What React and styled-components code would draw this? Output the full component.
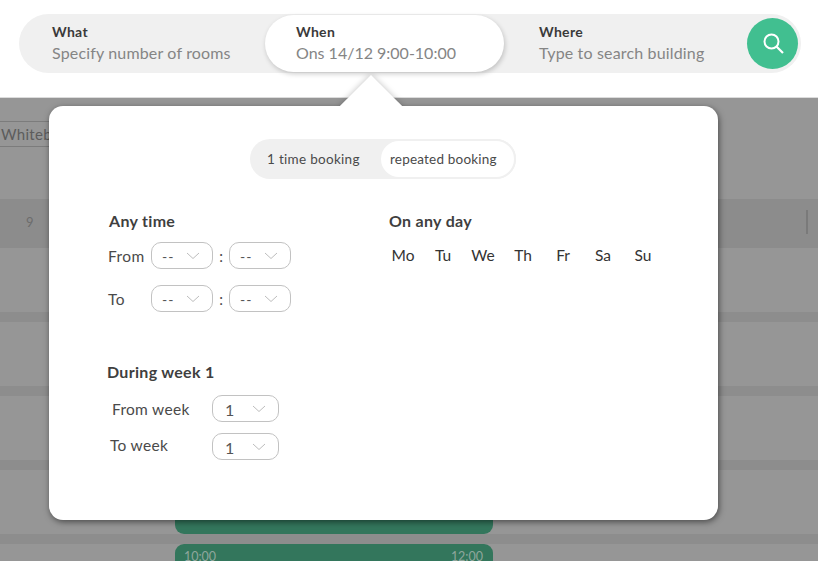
import React from "react";
import styled, { createGlobalStyle } from "styled-components";

const GlobalStyle = createGlobalStyle`
  * { box-sizing: border-box; }
  html, body { margin: 0; height: 100%; overflow: hidden; }
  body {
    background: #969696;
    font-family: "Lato", "Noto Sans", sans-serif;
    color: #333;
  }
`;

const days = ["Mo", "Tu", "We", "Th", "Fr", "Sa", "Su"];

const Chevron = () => (
  <ChevronIcon width="14" height="8" viewBox="0 0 14 8">
    <path d="M1 1l6 5.5L13 1" fill="none" stroke="#bdbdbd" strokeWidth="1" />
  </ChevronIcon>
);

const Select = ({ value, wide }) => (
  <SelectBox $wide={wide}>
    <SelectValue $wide={wide}>{value}</SelectValue>
    <Chevron />
  </SelectBox>
);

const App = () => {
  return (
    <Page>
      <GlobalStyle />
      <Header>
        <SearchBar>
          <Segment $width={246} $pad={33}>
            <SegmentLabel>What</SegmentLabel>
            <SegmentValue $spaced>Specify number of rooms</SegmentValue>
          </Segment>
          <Segment $width={239} $pad={31} $active>
            <SegmentLabel>When</SegmentLabel>
            <SegmentValue>Ons 14/12 9:00-10:00</SegmentValue>
          </Segment>
          <Segment $width={243} $pad={35}>
            <SegmentLabel>Where</SegmentLabel>
            <SegmentValue $spaced>Type to search building</SegmentValue>
          </Segment>
          <SearchButton>
            <svg width="26" height="26" viewBox="0 0 26 26">
              <circle cx="11.5" cy="10.5" r="7" fill="none" stroke="#fff" strokeWidth="2" />
              <path d="M16.5 15.5L23 22" stroke="#fff" strokeWidth="2.2" />
            </svg>
          </SearchButton>
        </SearchBar>
      </Header>

      <Calendar>
        <TagRow>
          <Tag>Whiteboard</Tag>
        </TagRow>
        <HourRow>
          <HourLabel>9</HourLabel>
          <Tick />
        </HourRow>
        <Slot />
        <Band />
        <Slot />
        <Band />
        <Slot />
        <Band />
        <Slot>
          <Booking $closed />
        </Slot>
        <Band />
        <Slot>
          <Booking>
            <span>10:00</span>
            <span>12:00</span>
          </Booking>
        </Slot>

        <Modal>
          <Notch>
            <NotchSquare />
          </Notch>
          <TabsRow>
            <Tabs>
              <Tab>1 time booking</Tab>
              <Tab $active>repeated booking</Tab>
            </Tabs>
          </TabsRow>
          <Columns>
            <div>
              <Heading $indent={60}>Any time</Heading>
              <TimeRow $top={11}>
                <RowLabel>From</RowLabel>
                <Select value="--" />
                <Colon>:</Colon>
                <Select value="--" />
              </TimeRow>
              <TimeRow $top={16}>
                <RowLabel>To</RowLabel>
                <Select value="--" />
                <Colon>:</Colon>
                <Select value="--" />
              </TimeRow>
              <Heading $indent={58} $top={50}>During week 1</Heading>
              <WeekRow $top={13} $indent={63}>
                <WeekLabel>From week</WeekLabel>
                <Select value="1" wide />
              </WeekRow>
              <WeekRow $top={11} $indent={61}>
                <WeekLabel $lifted>To week</WeekLabel>
                <Select value="1" wide />
              </WeekRow>
            </div>
            <div>
              <Heading>On any day</Heading>
              <Days>
                {days.map((day) => (
                  <Day key={day}>{day}</Day>
                ))}
              </Days>
            </div>
          </Columns>
        </Modal>
      </Calendar>
    </Page>
  );
};

export default App;

const Page = styled.div`
  height: 561px;
  display: flex;
  flex-direction: column;
  overflow: hidden;
`;

const Header = styled.header`
  height: 98px;
  flex: none;
  background: #fff;
  border-bottom: 1px solid #dcdcdc;
  padding: 14px 0 0 19px;
`;

const SearchBar = styled.div`
  width: 782px;
  height: 59px;
  display: flex;
  align-items: center;
  background: #f0f0f0;
  border-radius: 30px;
`;

const Segment = styled.div`
  width: ${(p) => p.$width}px;
  height: 57px;
  padding: 0 0 2px ${(p) => p.$pad}px;
  display: flex;
  flex-direction: column;
  justify-content: center;
  border-radius: 29px;
  background: ${(p) => (p.$active ? "#fff" : "transparent")};
  box-shadow: ${(p) => (p.$active ? "1px 2px 5px rgba(0, 0, 0, 0.2)" : "none")};
  position: relative;
`;

const SegmentLabel = styled.div`
  font-size: 14px;
  line-height: 20px;
  font-weight: 700;
  letter-spacing: 0.3px;
  color: #3a3a3a;
`;

const SegmentValue = styled.div`
  font-size: 16px;
  line-height: 22px;
  letter-spacing: ${(p) => (p.$spaced ? "0.16px" : "0")};
  color: #858585;
`;

const SearchButton = styled.button`
  width: 51px;
  height: 51px;
  padding: 0;
  border: none;
  border-radius: 50%;
  background: #41bf90;
  display: flex;
  align-items: center;
  justify-content: center;
`;

const Calendar = styled.main`
  flex: 1;
  position: relative;
  background: #969696;
`;

const TagRow = styled.div`
  height: 101px;
  padding-top: 23px;
`;

const Tag = styled.div`
  width: 120px;
  height: 26px;
  padding-left: 1px;
  border-top: 1px solid #7c7c7c;
  border-bottom: 1px solid #7c7c7c;
  font-size: 15px;
  line-height: 24px;
  letter-spacing: 0.3px;
  color: #5c5c5c;
`;

const HourRow = styled.div`
  height: 49px;
  background: #8c8c8c;
  display: flex;
  align-items: center;
  justify-content: space-between;
  padding: 0 10px 4px 26px;
`;

const HourLabel = styled.span`
  font-size: 13px;
  color: #6c6c6c;
`;

const Tick = styled.span`
  width: 2px;
  height: 24px;
  background: #7a7a7a;
`;

const Slot = styled.div`
  height: 64px;
  padding-left: 175px;
`;

const Band = styled.div`
  height: 10px;
  background: #8d8d8d;
`;

const Booking = styled.div`
  width: 318px;
  height: ${(p) => (p.$closed ? "64px" : "80px")};
  padding: 5px 10px 0 9px;
  display: flex;
  justify-content: space-between;
  background: #33765c;
  border-radius: ${(p) => (p.$closed ? "0 0 9px 9px" : "9px 9px 0 0")};
  font-size: 12.5px;
  line-height: 16px;
  color: #8fa69c;
`;

const Modal = styled.section`
  position: absolute;
  left: 49px;
  top: 8px;
  width: 669px;
  height: 414px;
  padding-top: 33px;
  background: #fff;
  border-radius: 14px;
  box-shadow: 1px 2px 6px rgba(0, 0, 0, 0.5);
`;

const Notch = styled.div`
  position: absolute;
  left: 282px;
  top: -33px;
  width: 80px;
  height: 33px;
  overflow: hidden;
`;

const NotchSquare = styled.div`
  position: absolute;
  left: 18px;
  top: 11px;
  width: 44px;
  height: 44px;
  background: #fff;
  transform: rotate(45deg);
  box-shadow: 0 0 6px rgba(0, 0, 0, 0.25);
`;

const TabsRow = styled.div`
  display: flex;
  padding-left: 201px;
`;

const Tabs = styled.div`
  width: 266px;
  height: 40px;
  display: flex;
  background: #f0f0f0;
  border-radius: 20px;
`;

const Tab = styled.div`
  width: ${(p) => (p.$active ? "137px" : "129px")};
  padding-left: ${(p) => (p.$active ? "9px" : "17px")};
  font-size: 13.5px;
  letter-spacing: ${(p) => (p.$active ? "0.2px" : "0.3px")};
  color: #4a4a4a;
  border-radius: 20px;
  background: ${(p) => (p.$active ? "#fff" : "transparent")};
  border: ${(p) => (p.$active ? "2px solid #f0f0f0" : "none")};
  line-height: ${(p) => (p.$active ? "36px" : "40px")};
`;

const Columns = styled.div`
  display: grid;
  grid-template-columns: 340px 1fr;
  margin-top: 32px;
`;

const Heading = styled.h3`
  margin: ${(p) => p.$top || 0}px 0 0 ${(p) => p.$indent || 0}px;
  font-size: 16px;
  line-height: 20px;
  font-weight: 700;
  letter-spacing: 0.3px;
  color: #3f3f3f;
`;

const TimeRow = styled.div`
  display: flex;
  align-items: center;
  margin-top: ${(p) => p.$top}px;
  padding-left: 59px;
`;

const RowLabel = styled.span`
  width: 43px;
  font-size: 15.5px;
  letter-spacing: 0.4px;
  color: #4a4a4a;
`;

const Colon = styled.span`
  width: 16px;
  text-align: center;
  font-size: 15px;
  color: #4a4a4a;
`;

const SelectBox = styled.div`
  width: ${(p) => (p.$wide ? "67px" : "62px")};
  height: 27px;
  padding: 0 7px 0 ${(p) => (p.$wide ? "12px" : "10px")};
  display: flex;
  align-items: center;
  justify-content: space-between;
  border: 1px solid #c2c2c2;
  border-radius: 10px;
  background: #fff;
`;

const SelectValue = styled.span`
  font-size: ${(p) => (p.$wide ? "16px" : "14px")};
  letter-spacing: ${(p) => (p.$wide ? "0" : "1px")};
  color: #555;
  padding-top: 2px;
`;

const ChevronIcon = styled.svg`
  flex: none;
  margin-right: 5px;
`;

const WeekRow = styled.div`
  display: flex;
  align-items: center;
  margin: ${(p) => p.$top}px 0 0 ${(p) => p.$indent}px;
`;

const WeekLabel = styled.span`
  width: ${(p) => (p.$lifted ? "102px" : "100px")};
  font-size: 15.5px;
  letter-spacing: 0.3px;
  color: #4a4a4a;
  padding-bottom: ${(p) => (p.$lifted ? "3px" : "0")};
`;

const Days = styled.div`
  display: flex;
  margin: 14px 0 0 -6px;
`;

const Day = styled.span`
  width: 40px;
  text-align: center;
  font-size: 15.5px;
  line-height: 20px;
  color: #333;
`;
